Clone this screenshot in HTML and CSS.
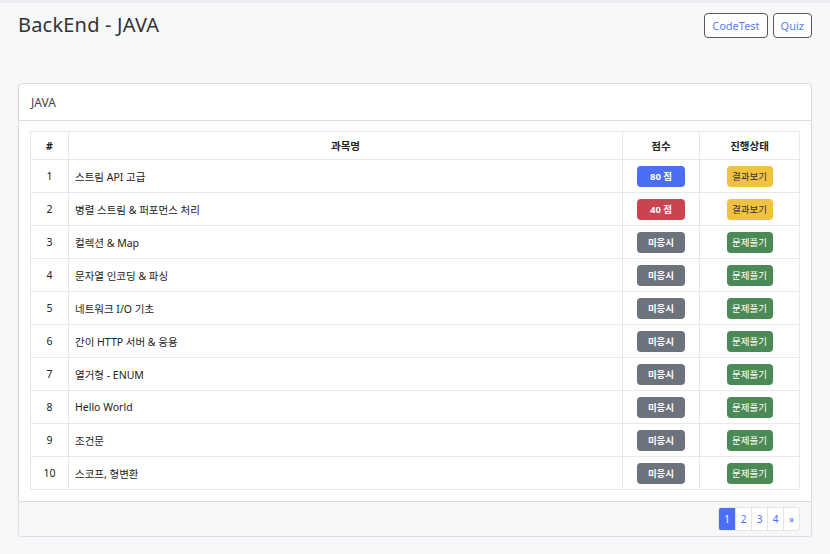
FILE: index.html
```html
<!DOCTYPE html>
<html lang="ko">
<head>
<meta charset="utf-8">
<link rel="stylesheet" href="styles.css">
</head>
<body>
<div class="page">
  <header class="top">
    <h1 class="title">BackEnd - JAVA</h1>
    <div class="actions">
      <a class="btn-outline">CodeTest</a>
      <a class="btn-outline">Quiz</a>
    </div>
  </header>
  <section class="card">
    <div class="card-header">JAVA</div>
    <div class="card-body">
      <table class="tbl">
        <colgroup>
          <col class="c-num"><col class="c-name"><col class="c-score"><col class="c-state">
        </colgroup>
        <thead>
          <tr><th>#</th><th>과목명</th><th>점수</th><th>진행상태</th></tr>
        </thead>
        <tbody>
          <tr><td class="center">1</td><td>스트림 API 고급</td><td class="center"><span class="badge blue">80 점</span></td><td class="center"><span class="tag yellow">결과보기</span></td></tr>
          <tr><td class="center">2</td><td>병렬 스트림 &amp; 퍼포먼스 처리</td><td class="center"><span class="badge red">40 점</span></td><td class="center"><span class="tag yellow">결과보기</span></td></tr>
          <tr><td class="center">3</td><td>컬렉션 &amp; Map</td><td class="center"><span class="badge grey">미응시</span></td><td class="center"><span class="tag green">문제풀기</span></td></tr>
          <tr><td class="center">4</td><td>문자열 인코딩 &amp; 파싱</td><td class="center"><span class="badge grey">미응시</span></td><td class="center"><span class="tag green">문제풀기</span></td></tr>
          <tr><td class="center">5</td><td>네트워크 I/O 기초</td><td class="center"><span class="badge grey">미응시</span></td><td class="center"><span class="tag green">문제풀기</span></td></tr>
          <tr><td class="center">6</td><td>간이 HTTP 서버 &amp; 응용</td><td class="center"><span class="badge grey">미응시</span></td><td class="center"><span class="tag green">문제풀기</span></td></tr>
          <tr><td class="center">7</td><td>열거형 - ENUM</td><td class="center"><span class="badge grey">미응시</span></td><td class="center"><span class="tag green">문제풀기</span></td></tr>
          <tr><td class="center">8</td><td>Hello World</td><td class="center"><span class="badge grey">미응시</span></td><td class="center"><span class="tag green">문제풀기</span></td></tr>
          <tr><td class="center">9</td><td>조건문</td><td class="center"><span class="badge grey">미응시</span></td><td class="center"><span class="tag green">문제풀기</span></td></tr>
          <tr><td class="center">10</td><td>스코프, 형변환</td><td class="center"><span class="badge grey">미응시</span></td><td class="center"><span class="tag green">문제풀기</span></td></tr>
        </tbody>
      </table>
    </div>
    <div class="card-footer">
      <ul class="pager">
        <li class="active">1</li><li>2</li><li>3</li><li>4</li><li>»</li>
      </ul>
    </div>
  </section>
</div>
</body>
</html>
```
FILE: styles.css
```css
* { box-sizing: border-box; }
html, body { margin: 0; padding: 0; }
body {
  background: #f7f8fa;
  font-family: "Noto Sans", "Noto Sans CJK KR", sans-serif;
  color: #222;
  border-top: 3px solid #eceef1;
}
.page {
  padding: 0 18px;
}
.top {
  display: flex;
  justify-content: space-between;
  align-items: flex-start;
  height: 80px;
}
.title {
  margin: 8px 0 0 0;
  font-size: 20px;
  font-weight: 400;
  color: #333;
  letter-spacing: 0.2px;
}
.actions {
  display: flex;
  gap: 5px;
  margin-top: 10px;
}
.btn-outline {
  display: inline-flex;
  align-items: center;
  height: 25px;
  padding: 0 7px;
  border: 1px solid #5a5a5a;
  border-radius: 4px;
  color: #5a7ef0;
  font-size: 11px;
  background: #fff;
}
.card {
  background: #fff;
  border: 1px solid #dcdde0;
  border-radius: 4px;
  box-shadow: 0 1px 2px rgba(0,0,0,0.08);
}
.card-header {
  height: 37px;
  padding: 0 12px;
  display: flex;
  align-items: center;
  font-size: 12px;
  color: #444;
  border-bottom: 1px solid #dcdde0;
}
.card-body {
  padding: 10px 11px 11px;
}
.tbl {
  width: 100%;
  border-collapse: collapse;
  font-size: 10.5px;
  color: #222;
}
.c-num { width: 38px; }
.c-score { width: 77px; }
.c-state { width: 100px; }
.tbl th, .tbl td {
  border: 1px solid #e8e9eb;
  padding: 0 6px;
}
.tbl th {
  height: 28px;
  font-weight: 700;
  text-align: center;
}
.tbl td { height: 33px; }
.center { text-align: center; }
.badge, .tag {
  display: inline-flex;
  align-items: center;
  justify-content: center;
  height: 21px;
  border-radius: 4px;
  font-size: 9.5px;
}
.badge {
  width: 48px;
  font-weight: 700;
  color: #fff;
}
.tag {
  width: 46px;
  color: #fff;
}
.blue { background: #4c6ef5; }
.red { background: #c9444f; }
.grey { background: #6c737d; }
.yellow { background: #f1c23d; color: #333; }
.green { background: #4b8a57; }
.card-footer {
  background: #f7f7f8;
  border-top: 1px solid #dcdde0;
  height: 35px;
  display: flex;
  justify-content: flex-end;
  align-items: center;
  padding: 0 11px;
}
.pager {
  list-style: none;
  margin: 0;
  padding: 0;
  display: flex;
  border: 1px solid #e3e5e9;
  border-radius: 3px;
  background: #fff;
  overflow: hidden;
}
.pager li {
  width: 16px;
  height: 22px;
  display: flex;
  align-items: center;
  justify-content: center;
  font-size: 10px;
  color: #4c6ef5;
  border-left: 1px solid #e3e5e9;
}
.pager li:first-child { border-left: none; }
.pager li.active { background: #4c6ef5; color: #fff; }
```
